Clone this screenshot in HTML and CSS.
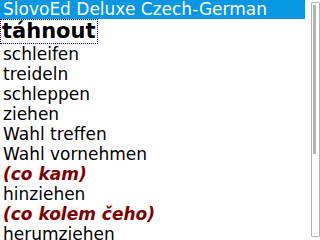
FILE: index.html
```html
<!DOCTYPE html>
<html>
<head><meta charset="utf-8"><link rel="stylesheet" href="styles.css"></head>
<body>
<div class="screen">
  <div class="main">
    <div class="title">SlovoEd Deluxe Czech-German</div>
    <div class="list">
      <div class="head"><span class="word">táhnout</span></div>
      <div class="row">schleifen</div>
      <div class="row">treideln</div>
      <div class="row">schleppen</div>
      <div class="row">ziehen</div>
      <div class="row">Wahl treffen</div>
      <div class="row">Wahl vornehmen</div>
      <div class="row note">(co kam)</div>
      <div class="row">hinziehen</div>
      <div class="row note">(co kolem čeho)</div>
      <div class="row">herumziehen</div>
    </div>
  </div>
  <div class="scroll"><div class="thumb"></div></div>
</div>
</body>
</html>
```
FILE: styles.css
```css
html, body { margin: 0; padding: 0; background: #fff; }
body { width: 320px; height: 240px; overflow: hidden; font-family: "DejaVu Sans", sans-serif; color: #000; }
.screen { display: flex; width: 320px; height: 240px; }
.main { width: 306px; display: flex; flex-direction: column; }
.title { height: 20px; background: #0797e2; color: #fff; font-size: 17px; line-height: 19px; padding-left: 3px; white-space: nowrap; }
.list { padding-left: 3px; }
.head { height: 25px; }
.word { display: inline-block; font-weight: bold; font-size: 21px; line-height: 23px; border: 1px dotted #0000dd; padding: 0 1px; margin-left: -3px; }
.row { height: 20px; line-height: 20px; font-size: 17px; white-space: nowrap; }
.note { color: #800000; font-weight: bold; font-style: italic; }
.scroll { margin: 2px 0 3px 6px; width: 5px; border: 1px solid #b4b4b4; border-radius: 1px; padding: 2px 1px; }
.thumb { width: 3px; height: 149px; background: #b4b4b4; }
```
